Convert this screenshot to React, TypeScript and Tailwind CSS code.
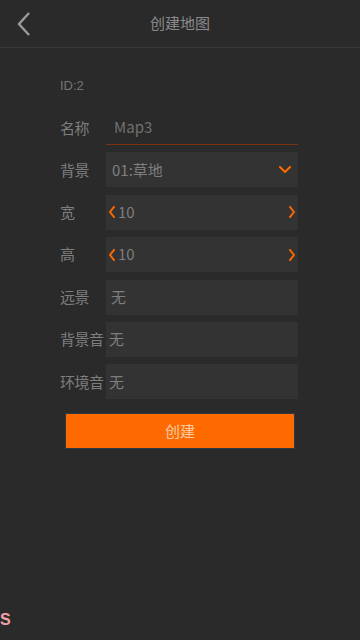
import React from 'react';

const font = { fontFamily: '"Noto Sans CJK SC", "Liberation Sans", sans-serif' };

const Chevron = ({ dir, className }: { dir: 'left' | 'right' | 'down'; className?: string }) => {
  const d =
    dir === 'left' ? 'M5 1 L1 6 L5 11' : dir === 'right' ? 'M1 1 L5 6 L1 11' : 'M1 1 L6 6 L11 1';
  const size = dir === 'down' ? { w: 12, h: 7 } : { w: 6, h: 12 };
  return (
    <svg width={size.w} height={size.h} viewBox={`0 0 ${size.w} ${size.h}`} className={className}>
      <path d={d} fill="none" stroke="#ff6a00" strokeWidth="2" strokeLinecap="square" />
    </svg>
  );
};

const Row = ({ label, children }: { label: string; children: React.ReactNode }) => (
  <div className="flex items-center">
    <div className="w-[46px] text-[15px] text-[#7e7e7e] whitespace-nowrap tracking-[-0.5px]">{label}</div>
    {children}
  </div>
);

const Field = ({ children }: { children: React.ReactNode }) => (
  <div className="w-[192px] h-[35px] bg-[#333333] flex items-center text-[15px] text-[#7e7e7e]">
    {children}
  </div>
);

const Stepper = ({ value }: { value: string }) => (
  <Field>
    <Chevron dir="left" className="ml-[3px]" />
    <span className="ml-[3px] flex-1">{value}</span>
    <Chevron dir="right" className="mr-[3px]" />
  </Field>
);

export default function App() {
  return (
    <div className="relative w-[360px] h-[640px] bg-[#2a2a2a] overflow-hidden" style={font}>
      <div className="relative h-[48px] flex items-center justify-center border-b border-[#383838]">
        <svg width="16" height="26" viewBox="0 0 16 26" className="absolute left-[16px] top-[11px]">
          <path d="M13 2 L3 13 L13 24" fill="none" stroke="#9a9a9a" strokeWidth="2.4" />
        </svg>
        <span className="text-[15px] text-[#8a8a8a]">创建地图</span>
      </div>

      <div className="pl-[60px] pt-[29px]">
        <div className="text-[13px] text-[#757575] leading-[18px]" style={{ fontFamily: '"Liberation Sans", sans-serif' }}>
          ID:2
        </div>

        <div className="mt-[16px] flex flex-col gap-[7.4px]">
          <Row label="名称">
            <div className="w-[192px] h-[34px] border-b border-[#7a3410] flex items-center pl-[8px] text-[15px] text-[#707070]">
              Map3
            </div>
          </Row>
          <Row label="背景">
            <Field>
              <span className="ml-[6px] flex-1">01:草地</span>
              <Chevron dir="down" className="mr-[7px]" />
            </Field>
          </Row>
          <Row label="宽">
            <Stepper value="10" />
          </Row>
          <Row label="高">
            <Stepper value="10" />
          </Row>
          <Row label="远景">
            <Field>
              <span className="ml-[5px]">无</span>
            </Field>
          </Row>
          <Row label="背景音">
            <Field>
              <span className="ml-[3px]">无</span>
            </Field>
          </Row>
          <Row label="环境音">
            <Field>
              <span className="ml-[3px]">无</span>
            </Field>
          </Row>
        </div>
      </div>

      <div className="mt-[14px] ml-[65px] w-[230px] h-[36px] bg-[#ff6a00] border border-[#2c3a44] flex items-center justify-center text-[15px] text-[#f6caa6]">
        创建
      </div>

      <div className="absolute left-0 top-[608px] text-[16px] font-bold text-[#f2a0a8]" style={{ fontFamily: '"Liberation Sans", sans-serif' }}>
        S
      </div>
    </div>
  );
}
